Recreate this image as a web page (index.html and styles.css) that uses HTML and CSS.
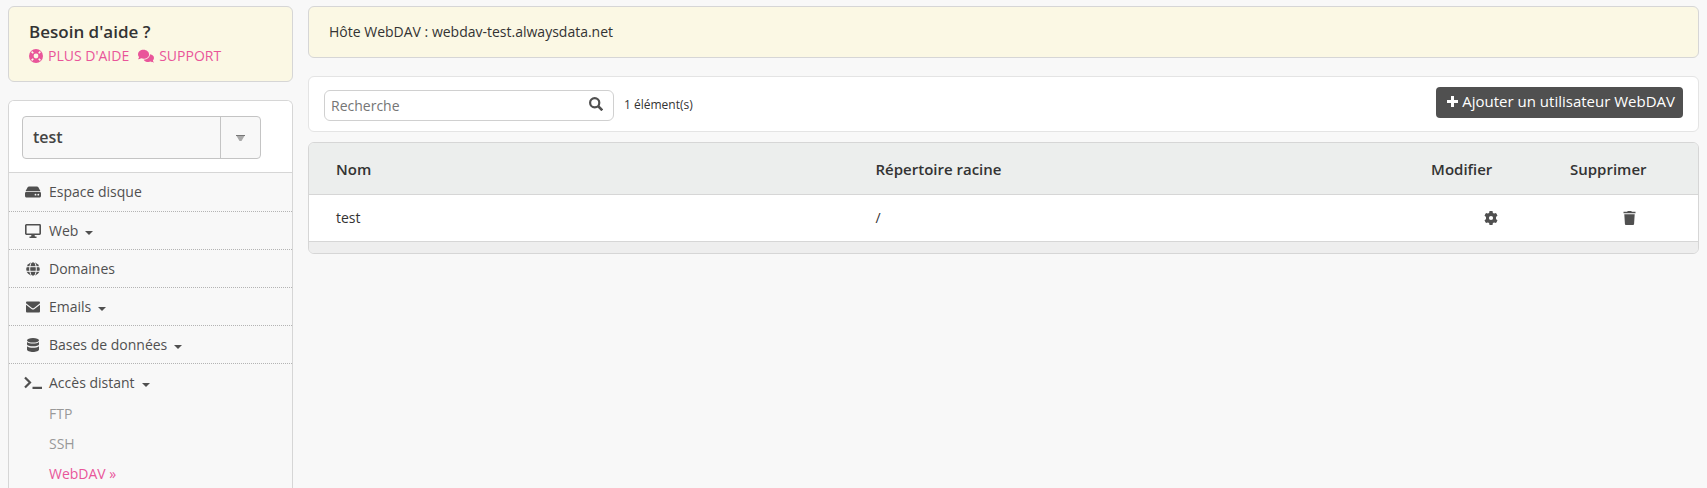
FILE: index.html
```html
<!DOCTYPE html>
<html lang="fr">
<head>
<meta charset="utf-8">
<title>WebDAV</title>
<link rel="stylesheet" href="styles.css">
</head>
<body>
<div class="layout">
  <aside class="sidebar">
    <section class="notice help">
      <h2 class="help-title">Besoin d'aide ?</h2>
      <div class="help-links">
        <a href="#aide"><svg class="icon-14" viewBox="0 0 14 14" aria-hidden="true"><circle cx="7" cy="7" r="7" fill="currentColor"/><path d="M2.600 2.600l1.700 1.700M11.400 2.600L9.700 4.300M2.600 11.400l1.700-1.700M11.400 11.400L9.700 9.700" stroke="#fbf8e4" stroke-width="1.600"/><circle cx="7" cy="7" r="2.400" fill="#fbf8e4"/></svg>PLUS D'AIDE</a>
        <a href="#support"><svg class="icon-16" viewBox="0 0 16 14" aria-hidden="true" fill="currentColor"><path d="M5.500.8C2.500.8 0 2.800 0 5.400c0 1 .4 1.900 1.100 2.700C.9 9 .3 9.700 0 10.200c1.300.1 2.400-.4 3.100-.9.800.3 1.600.5 2.400.5 3.100 0 5.600-2 5.600-4.400S8.600.8 5.500.8z"/><path d="M12 5.300c0 3-2.900 5.300-6.400 5.400.9 1.500 2.700 2.400 4.800 2.400.8 0 1.700-.2 2.400-.5.7.5 1.800 1 3.200.9-.4-.5-.9-1.200-1.100-2.100.7-.7 1.100-1.600 1.100-2.500 0-1.800-1.700-3.200-4-3.600z"/></svg>SUPPORT</a>
      </div>
    </section>
    <nav class="menu" aria-label="Menu principal">
      <div class="account">
        <button class="account-picker" type="button" aria-label="Compte : test"><span class="account-name">test</span><span class="account-arrow"><svg width="9" height="6" viewBox="0 0 9 6" aria-hidden="true"><path d="M0 0h9L5.500 6h-2z" fill="#aaa"/><path d="M0 0h9v1H0z" fill="#777"/></svg></span></button>
      </div>
      <ul class="menu-list">
        <li><a href="#disque"><svg class="icon-16" viewBox="0 0 16 14" aria-hidden="true" fill="currentColor"><path d="M4 1.500h8c.5 0 .9.2 1.200.6L15.400 6H.6l2.200-3.900c.3-.4.700-.6 1.200-.6zM1.500 6.800h13c.8 0 1.500.7 1.500 1.500V11c0 .8-.7 1.500-1.500 1.500h-13C.7 12.500 0 11.800 0 11V8.300c0-.8.700-1.500 1.500-1.500z"/><circle cx="10.500" cy="9.700" r=".9" fill="#f8f8f8"/><circle cx="13.300" cy="9.700" r=".9" fill="#f8f8f8"/></svg>Espace disque</a></li>
        <li><a href="#web"><svg class="icon-16" viewBox="0 0 16 14" aria-hidden="true"><rect x=".8" y=".8" width="14.400" height="9.400" rx=".6" fill="none" stroke="currentColor" stroke-width="1.600"/><path d="M6.500 10.500h3l.4 2h1.600V14h-7v-1.500h1.600z" fill="currentColor"/></svg>Web<i class="caret"></i></a></li>
        <li><a href="#domaines"><svg class="icon-16" viewBox="0 0 16 14" aria-hidden="true"><circle cx="8" cy="7" r="6.800" fill="currentColor"/><g fill="none" stroke="#f8f8f8"><ellipse cx="8" cy="7" rx="3.300" ry="7.500"/><path d="M1 4.700h14M1 9.300h14"/></g></svg>Domaines</a></li>
        <li><a href="#emails"><svg class="icon-16" viewBox="0 0 16 14" aria-hidden="true" fill="currentColor"><path d="M2.300 1.500h11.400c.8 0 1.300.5 1.300 1.200v.6L9 7.900c-.6.5-1.400.5-2 0L1 3.300v-.6c0-.7.500-1.200 1.300-1.200zM1 4.700l5.500 4.200c.9.700 2.100.7 3 0L15 4.700v6.500c0 .8-.5 1.300-1.300 1.300H2.300c-.8 0-1.300-.5-1.300-1.300z"/></svg>Emails<i class="caret"></i></a></li>
        <li><a href="#bases"><svg class="icon-16" viewBox="0 0 16 14" aria-hidden="true" fill="currentColor"><ellipse cx="8" cy="2.300" rx="6" ry="2.300"/><path d="M2 4.100c2.500 2 9.500 2 12 0v2.200c0 2.700-12 2.700-12 0zM2 8.200c2.500 2 9.500 2 12 0v3.300c0 3.300-12 3.300-12 0z"/></svg>Bases de données<i class="caret"></i></a></li>
        <li><a href="#acces"><svg class="icon-wide" viewBox="0 0 18 14" aria-hidden="true" fill="none" stroke="currentColor" stroke-width="2.200"><path d="M1 1.500l5 5-5 5M8.500 11.800H18"/></svg>Accès distant<i class="caret"></i></a>
          <ul class="submenu">
            <li><a href="#ftp">FTP</a></li>
            <li><a href="#ssh">SSH</a></li>
            <li><a class="current" href="#webdav" aria-current="page">WebDAV »</a></li>
          </ul>
        </li>
      </ul>
    </nav>
  </aside>
  <main class="content">
    <p class="notice host">Hôte WebDAV : webdav-test.alwaysdata.net</p>
    <div class="toolbar">
      <form class="search" role="search">
        <input type="search" aria-label="Recherche" placeholder="Recherche">
        <button type="submit" aria-label="Lancer la recherche"><svg class="icon-14" viewBox="0 0 14 14" aria-hidden="true" fill="none" stroke="currentColor"><circle cx="5.700" cy="5.700" r="4.600" stroke-width="2.200"/><path d="M9 9l4.300 4.300" stroke-width="2.600"/></svg></button>
      </form>
      <span class="count">1 élément(s)</span>
      <button class="add" type="button"><svg width="11" height="11" viewBox="0 0 11 11" aria-hidden="true"><path d="M4 0h3v4h4v3H7v4H4V7H0V4h4z" fill="currentColor"/></svg>Ajouter un utilisateur WebDAV</button>
    </div>
    <div class="panel">
      <table>
        <thead><tr><th scope="col">Nom</th><th class="col-root" scope="col">Répertoire racine</th><th class="col-edit" scope="col">Modifier</th><th class="col-delete" scope="col">Supprimer</th></tr></thead>
        <tbody><tr><td>test</td><td>/</td>
          <td class="action"><a href="#modifier" aria-label="Modifier"><svg class="icon-14" viewBox="0 0 14 14" aria-hidden="true"><path fill="currentColor" fill-rule="evenodd" d="M5.500 0h3l.4 1.900 1.200.7 1.900-.6 1.500 2.600-1.500 1.300v2.200l1.500 1.300-1.500 2.600-1.900-.6-1.200.7-.4 1.900h-3l-.4-1.900-1.200-.7-1.900.6L.5 9.400 2 8.100V5.900L.5 4.600 2 2l1.900.6 1.200-.7zM7 4.900a2.100 2.100 0 100 4.200 2.100 2.100 0 000-4.200z"/></svg></a></td>
          <td class="action"><a href="#supprimer" aria-label="Supprimer"><svg class="icon-14" viewBox="0 0 14 14" aria-hidden="true" fill="currentColor"><path d="M.5.8h3.700l.5-.8h3.600l.5.8h3.700v1.500H.5zM1.300 3.200h10.400l-.6 9.500c0 .7-.6 1.300-1.300 1.300H3.200c-.7 0-1.300-.6-1.300-1.300z"/></svg></a></td></tr></tbody>
      </table>
      <div class="panel-foot"></div>
    </div>
  </main>
</div>
</body>
</html>
```
FILE: styles.css
```css
* { box-sizing: border-box; }
html { background: #f8f8f8; }
body {
  margin: 0;
  color: #333;
  font: 14px/20px "Open Sans", sans-serif;
}
a { color: inherit; text-decoration: none; }
ul { list-style: none; margin: 0; padding: 0; }
button, input { font: inherit; color: inherit; }
svg { flex: none; display: block; }
.icon-14 { width: 14px; height: 14px; }
.icon-16 { width: 16px; height: 14px; }
.icon-wide { width: 18px; height: 14px; margin: 0 -1px; }

.layout { display: flex; gap: 15px; padding: 6px 8px 0; }
.sidebar { flex: none; width: 285px; }
.content { flex: 1; min-width: 0; }

.notice {
  margin: 0 0 18px;
  padding: 15px 20px;
  border: 1px solid #d6d6d6;
  border-radius: 6px;
  background: #fbf8e4;
}
.help { padding: 13px 20px; }
.help-title { margin: 0; font-size: 17px; line-height: 24px; font-weight: 600; }
.help-links { display: flex; gap: 9px; line-height: 24px; color: #e9559a; }
.help-links a { display: flex; align-items: center; gap: 5px; }

.menu { border: 1px solid #d6d6d6; border-bottom: 0; border-radius: 6px 6px 0 0; overflow: hidden; }
.account { padding: 15px 13px 13px; background: #fff; border-bottom: 1px solid #d6d6d6; }
.account-picker {
  display: flex;
  width: 239px;
  height: 43px;
  padding: 0;
  border: 1px solid #c4c4c4;
  border-radius: 4px;
  background: #f8f8f8;
  color: #444;
  font-size: 16px;
  font-weight: 600;
  text-align: left;
}
.account-name { flex: 1; padding-left: 10px; line-height: 40px; }
.account-arrow { width: 40px; height: 41px; display: grid; place-items: center; border-left: 1px solid #c4c4c4; }

.menu-list { color: #505050; }
.menu-list > li + li { border-top: 1px dotted #b4b4b4; }
.menu-list > li > a { display: flex; align-items: center; gap: 8px; height: 37px; padding: 0 16px; }
.menu-list > li:first-child > a { height: 38px; }
.caret { margin: 4px 0 0 -1px; border: 4px solid transparent; border-top-color: currentColor; border-bottom: 0; }
.submenu { margin-top: -2px; padding: 0 40px; color: #999; }
.submenu a { display: block; line-height: 30px; }
.submenu .current { color: #e9559a; }

.toolbar {
  display: flex;
  align-items: flex-start;
  margin-bottom: 10px;
  padding: 10px 15px;
  border: 1px solid #e4e4e4;
  border-radius: 6px;
  background: #fff;
}
.search {
  display: flex;
  width: 290px;
  height: 31px;
  margin-top: 3px;
  border: 1px solid #d0d0d0;
  border-radius: 6px;
}
.search input {
  flex: 1;
  min-width: 0;
  padding: 0 6px;
  border: 0;
  background: none;
  outline: 0;
}
.search input::placeholder { color: #757575; }
.search button { padding: 0 10px 4px; border: 0; background: none; color: #505050; }
.count { margin: 8px 10px 0; font-size: 12px; }
.add {
  display: flex;
  align-items: center;
  gap: 4px;
  height: 31px;
  margin-left: auto;
  padding: 0 8px 3px 11px;
  border: 0;
  border-radius: 4px;
  background: #505050;
  color: #fff;
  font-size: 15px;
}

.panel { border: 1px solid #d6d6d6; border-radius: 6px; overflow: hidden; }
table { width: 100%; table-layout: fixed; border-collapse: separate; border-spacing: 0; }
th, td { padding: 0 0 0 27px; text-align: left; border-bottom: 1px solid #d6d6d6; }
th { height: 52px; background: #eceeed; font-size: 15px; font-weight: 600; }
td { height: 47px; background: #fff; }
.col-root { width: 40%; }
.col-edit { width: 10%; }
.col-delete { width: 155px; }
.action { padding-left: 80px; color: #505050; }
.panel-foot { height: 11px; background: #eee; }
```
